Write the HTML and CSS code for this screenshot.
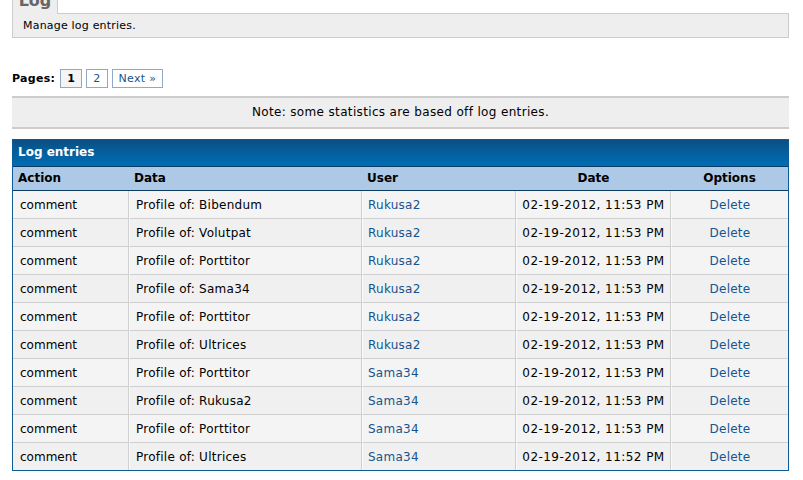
FILE: index.html
```html
<!DOCTYPE html>
<html>
<head>
<meta charset="utf-8">
<link rel="stylesheet" href="styles.css">
</head>
<body>
<div class="page">
  <div class="tabs"><span class="tab">Log</span></div>
  <div class="desc">Manage log entries.</div>
  <div class="pagination">
    <span class="pages-label">Pages:</span>
    <span class="pg current">1</span>
    <a class="pg" href="#">2</a>
    <a class="pg" href="#">Next &raquo;</a>
  </div>
  <div class="note">Note: some statistics are based off log entries.</div>
  <div class="tbl-wrap">
    <div class="tbl-title">Log entries</div>
    <table class="tbl">
      <colgroup>
        <col class="c-action"><col class="c-data"><col class="c-user"><col class="c-date"><col class="c-opt">
      </colgroup>
      <thead>
        <tr>
          <th>Action</th><th>Data</th><th>User</th><th class="center">Date</th><th class="center">Options</th>
        </tr>
      </thead>
      <tbody>
        <tr class="alt1"><td>comment</td><td class="data">Profile of: Bibendum</td><td><a href="#">Rukusa2</a></td><td class="center date">02-19-2012, 11:53 PM</td><td class="center"><a href="#">Delete</a></td></tr>
        <tr class="alt2"><td>comment</td><td class="data">Profile of: Volutpat</td><td><a href="#">Rukusa2</a></td><td class="center date">02-19-2012, 11:53 PM</td><td class="center"><a href="#">Delete</a></td></tr>
        <tr class="alt1"><td>comment</td><td class="data">Profile of: Porttitor</td><td><a href="#">Rukusa2</a></td><td class="center date">02-19-2012, 11:53 PM</td><td class="center"><a href="#">Delete</a></td></tr>
        <tr class="alt2"><td>comment</td><td class="data">Profile of: Sama34</td><td><a href="#">Rukusa2</a></td><td class="center date">02-19-2012, 11:53 PM</td><td class="center"><a href="#">Delete</a></td></tr>
        <tr class="alt1"><td>comment</td><td class="data">Profile of: Porttitor</td><td><a href="#">Rukusa2</a></td><td class="center date">02-19-2012, 11:53 PM</td><td class="center"><a href="#">Delete</a></td></tr>
        <tr class="alt2"><td>comment</td><td class="data">Profile of: Ultrices</td><td><a href="#">Rukusa2</a></td><td class="center date">02-19-2012, 11:53 PM</td><td class="center"><a href="#">Delete</a></td></tr>
        <tr class="alt1"><td>comment</td><td class="data">Profile of: Porttitor</td><td><a href="#">Sama34</a></td><td class="center date">02-19-2012, 11:53 PM</td><td class="center"><a href="#">Delete</a></td></tr>
        <tr class="alt2"><td>comment</td><td class="data">Profile of: Rukusa2</td><td><a href="#">Sama34</a></td><td class="center date">02-19-2012, 11:53 PM</td><td class="center"><a href="#">Delete</a></td></tr>
        <tr class="alt1"><td>comment</td><td class="data">Profile of: Porttitor</td><td><a href="#">Sama34</a></td><td class="center date">02-19-2012, 11:53 PM</td><td class="center"><a href="#">Delete</a></td></tr>
        <tr class="alt2 last"><td>comment</td><td class="data">Profile of: Ultrices</td><td><a href="#">Sama34</a></td><td class="center date">02-19-2012, 11:52 PM</td><td class="center"><a href="#">Delete</a></td></tr>
      </tbody>
    </table>
  </div>
</div>
</body>
</html>
```

FILE: styles.css
```css
html, body {
  margin: 0;
  padding: 0;
  background: #fff;
}
body {
  font-family: "DejaVu Sans", Verdana, sans-serif;
  font-size: 12px;
  color: #000;
  overflow: hidden;
}
a {
  color: #15558f;
  text-decoration: none;
}
.page {
  padding: 0 14px 0 12px;
}
.tabs {
  display: flex;
  margin-top: -13px;
  margin-bottom: -1px;
  position: relative;
  z-index: 1;
}
.tab {
  display: block;
  width: 44px;
  box-sizing: content-box;
  text-align: center;
  height: 23px;
  padding-top: 3px;
  line-height: 20px;
  font-size: 16px;
  font-weight: bold;
  color: #666;
  background: #eee;
  border: 1px solid #ccc;
  border-bottom: none;
}
.desc {
  background: #eee;
  border: 1px solid #ccc;
  padding: 5px 10px 5px 10px;
  line-height: 13px;
  font-size: 11px;
  letter-spacing: 0.2px;
}
.pagination {
  margin-top: 31px;
  display: flex;
  align-items: center;
  gap: 4px;
  font-size: 11px;
  line-height: 13px;
  letter-spacing: 0.3px;
}
.pages-label {
  font-weight: bold;
  margin-right: 1px;
}
.pg {
  display: block;
  border: 1px solid #8fa9c8;
  padding: 2px 6px;
  color: #15558f;
  background: #fff;
}
.pg.current {
  background: #f4f4f4;
  color: #000;
  font-weight: bold;
}
.note {
  margin-top: 8px;
  background: #eee;
  border-top: 2px solid #ccc;
  border-bottom: 2px solid #ccc;
  padding: 7px 0;
  line-height: 15px;
  text-align: center;
  font-size: 12px;
  letter-spacing: 0.35px;
}
.tbl-wrap {
  margin-top: 10px;
  border: 1px solid #0d5c95;
}
.tbl-title {
  height: 26px;
  line-height: 25px;
  padding-left: 5px;
  color: #fff;
  font-weight: bold;
  font-size: 12px;
  background: linear-gradient(to bottom, #0a4f84 0%, #045f9e 50%, #006db5 100%);
  border-bottom: 1px solid #0b3b60;
}
.tbl {
  width: 100%;
  border-collapse: separate;
  border-spacing: 0;
  table-layout: fixed;
}
.c-action { width: 116px; }
.c-data { width: 233px; }
.c-user { width: 154px; }
.c-date { width: 155px; }
.c-opt { width: auto; }
.tbl th {
  background: #adc9e6;
  text-align: left;
  font-weight: bold;
  height: 23px;
  padding: 0 5px;
  line-height: 23px;
  border-bottom: 1px solid #0b3b60;
}
.tbl td {
  height: 26px;
  padding: 1px 0 0 5px;
  line-height: 26px;
  border-bottom: 1px solid #cfcfcf;
  border-right: 1px solid #cfcfcf;
  border-left: 1px solid #fafafa;
  white-space: nowrap;
  overflow: hidden;
  letter-spacing: 0.25px;
}
.tbl td:first-child {
  border-left: none;
  padding-left: 7px;
  letter-spacing: 0;
}
.tbl td.data {
  padding-left: 6px;
}
.tbl td:last-child {
  border-right: none;
}
.tbl tr.last td {
  border-bottom: none;
}
.tbl .center {
  text-align: center;
  padding-left: 0;
}
.tbl td.date {
  letter-spacing: 0.45px;
}
.tbl th.center {
  padding: 0;
}
.alt1 td {
  background: #f4f4f4;
}
.alt2 td {
  background: #f0f0f0;
}
```
